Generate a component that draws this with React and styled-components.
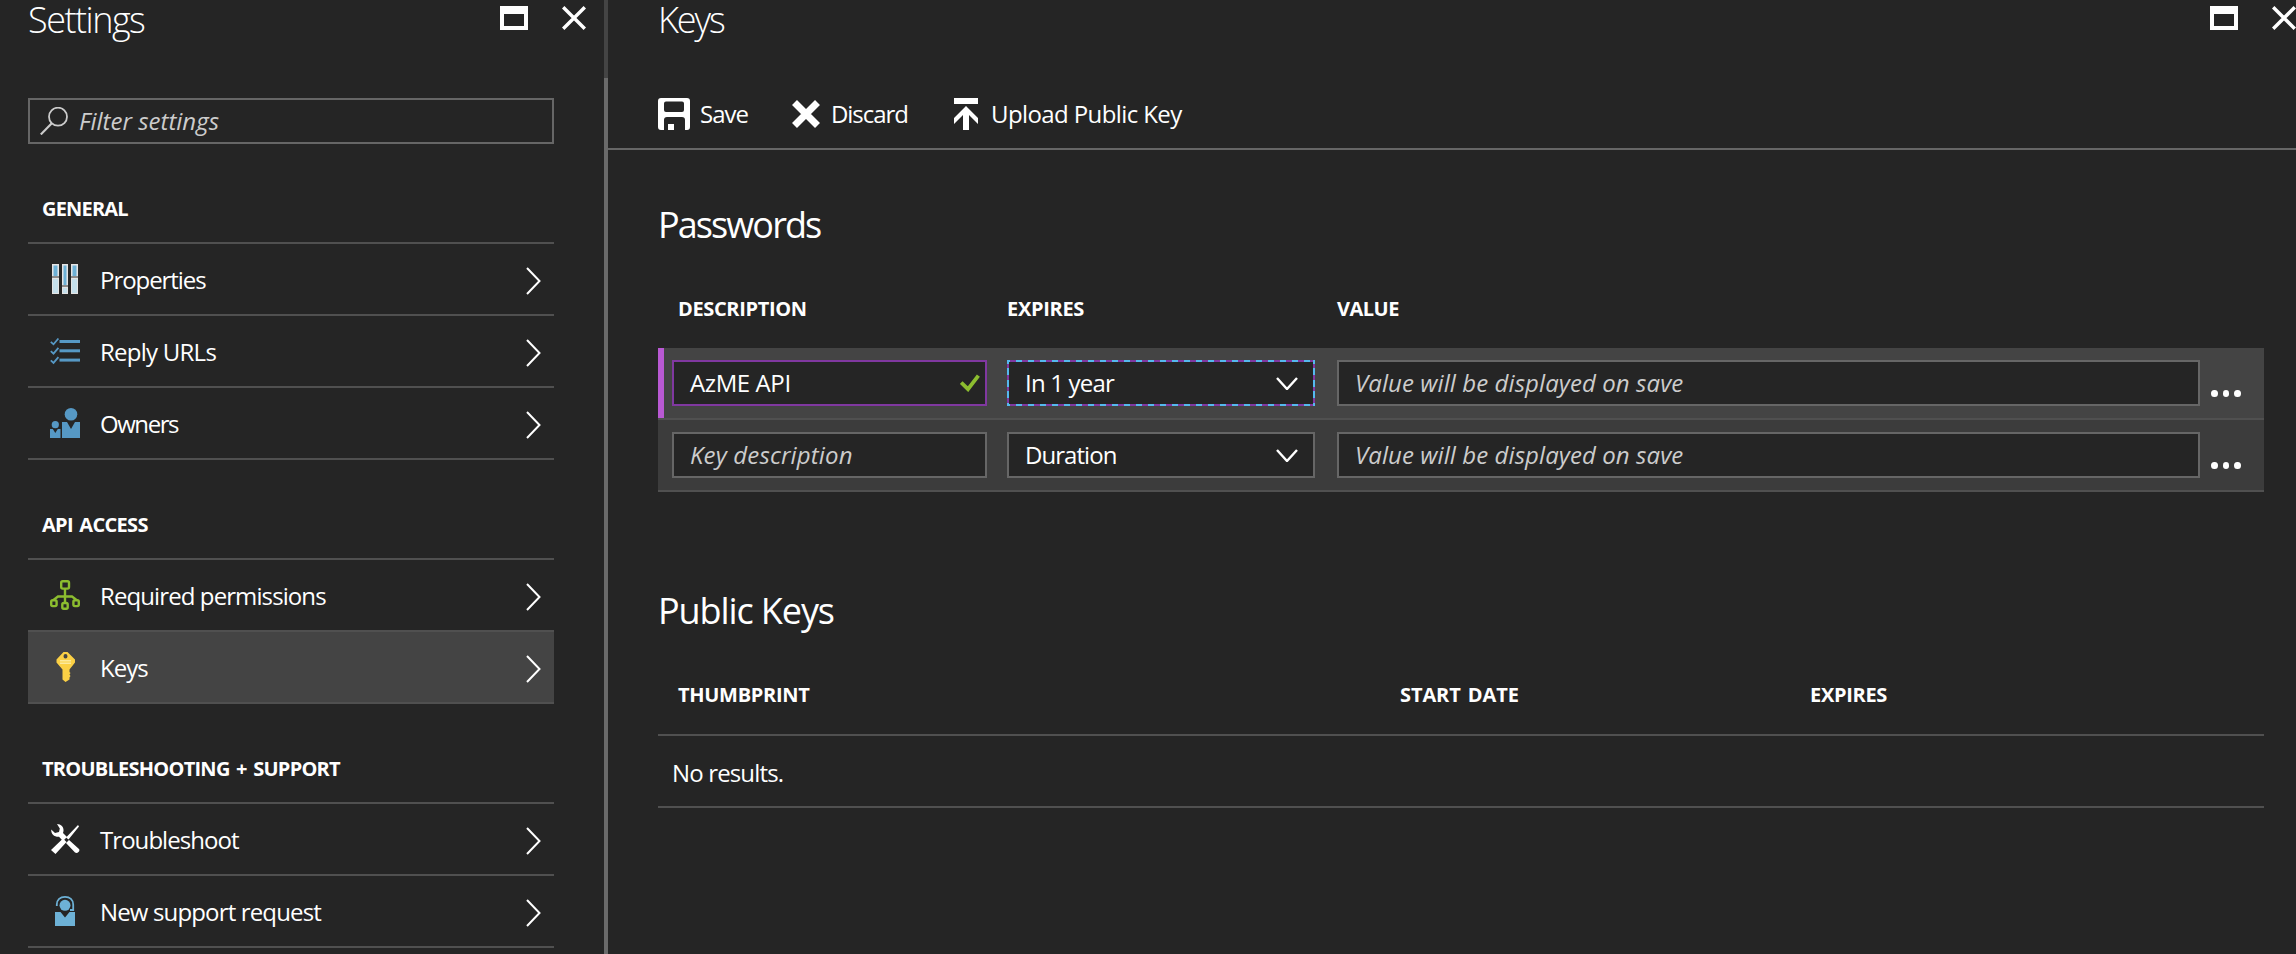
import React from 'react';
import styled, { createGlobalStyle } from 'styled-components';

const Global = createGlobalStyle`
  * { box-sizing: border-box; }
  body { margin: 0; background: #252525; color: #fff; font: 480 24px/32px 'Open Sans', 'Noto Sans', sans-serif; overflow: hidden; }
  h1, h2, h3 { margin: 0; font-weight: 420; }
  svg { display: block; flex: none; }
`;

const Page = styled.div`
  display: flex; width: 2296px; height: 954px; overflow: hidden;
`;
const Sidebar = styled.aside`
  width: 604px; padding: 0 50px 0 28px; flex: none;
`;
const Divider = styled.div`
  width: 4px; flex: none;
  background: linear-gradient(#444 78px, #6a6a6a 78px);
`;
const Main = styled.main`
  flex: 1; min-width: 0;
`;
const BladeHeader = styled.header`
  display: flex; justify-content: space-between; align-items: flex-start;
  height: 98px;
  margin-right: ${p => p.$right}px;
  padding-left: ${p => p.$left}px;
`;
const WindowButtons = styled.div`
  display: flex; gap: 34px; padding-top: 6px; flex: none;
`;
const Text = styled.span`
  white-space: nowrap;
  letter-spacing: ${p => p.$ls || 0}px;
  word-spacing: ${p => p.$ws || 0}px;
`;
const BladeTitle = styled.h1`
  font-size: 36px; line-height: 40px; font-weight: 350; white-space: nowrap;
  letter-spacing: ${p => p.$ls}px;
`;
const SearchBox = styled.div`
  display: flex; align-items: center; height: 46px; border: 2px solid #666; padding: 0 0 1px 10px; gap: 11px;
  color: #ccc; font-style: italic;
`;
const Group = styled.section`
  margin-top: 50px;
`;
const GroupTitle = styled.h3`
  font-size: 20px; line-height: 30px; font-weight: 700; padding-left: 14px; height: 48px; white-space: nowrap;
  letter-spacing: ${p => p.$ls}px;
  word-spacing: 2px;
`;
const MenuList = styled.div`
  border-top: 2px solid #505050;
`;
const MenuItem = styled.div`
  display: flex; align-items: center; height: 72px; padding: 0 13px 0 22px;
  border-bottom: 2px solid #505050;
  background: ${p => (p.$active ? '#444' : 'transparent')};
  & > span { flex: 1; padding-left: 20px; padding-top: 2px; }
  & > svg:last-child { margin-top: 3px; }
`;
const Toolbar = styled.div`
  display: flex; align-items: flex-start; height: 52px; padding-left: 50px; border-bottom: 2px solid #666;
`;
const ToolButton = styled.div`
  display: flex; align-items: center; height: 32px; width: ${p => p.$w}px; gap: ${p => p.$gap}px;
`;
const Content = styled.div`
  padding: 0 32px 0 50px;
`;
const SectionTitle = styled.h2`
  font-size: 36px; line-height: 48px; white-space: nowrap;
  margin-top: ${p => p.$top}px;
  letter-spacing: ${p => p.$ls}px;
`;
const HeadRow = styled.div`
  display: grid; grid-template-columns: ${p => p.$cols}; padding-left: 20px;
  font-size: 20px; line-height: 28px; font-weight: 700;
  margin-top: ${p => p.$top}px; height: ${p => p.$h}px;
`;
const KeyRow = styled.div`
  display: grid; grid-template-columns: 315px 310px 863px 30px; column-gap: 20px; align-items: center;
  height: 72px; padding-left: 14px;
  border-bottom: 2px solid #505050;
  background: ${p => (p.$dirty ? '#444' : '#3c3c3c')};
  box-shadow: ${p => (p.$dirty ? 'inset 6px 0 0 #b959d3' : 'none')};
`;
const Field = styled.div`
  display: flex; align-items: center; justify-content: space-between; height: 46px; position: relative;
  padding: 0 ${p => p.$pr || 15}px ${p => p.$pb || 0}px 16px;
  background: #252525;
  border: 2px solid ${p => (p.$dirty ? '#8038a0' : '#666')};
  color: ${p => (p.$hint ? '#ccc' : '#fff')};
  font-style: ${p => (p.$hint ? 'italic' : 'normal')};
`;
const SelectField = styled(Field)`
  width: 308px;
`;
const dashesX = 'repeating-linear-gradient(90deg, #55b9ee 0 3px, transparent 3px 9px, #55b9ee 9px 12px)';
const dashesY = 'repeating-linear-gradient(180deg, #55b9ee 0 4px, transparent 4px 8.5px, #55b9ee 8.5px 11.5px)';
const FocusRing = styled.div`
  position: absolute; inset: -2px;
  background: ${dashesX} 0 0 / 100% 2px, ${dashesX} 0 100% / 100% 2px, ${dashesY} 0 0 / 2px 100%, ${dashesY} 100% 0 / 2px 100%;
  background-repeat: no-repeat;
`;
const More = styled.div`
  display: flex; gap: 5px; padding-top: 21px; margin-left: -9px;
  & > i { width: 6.5px; height: 7px; border-radius: 50%; background: #fff; }
`;
const EmptyRow = styled.div`
  height: 74px; border: solid #505050; border-width: 2px 0; padding: 21px 0 0 14px;
`;

const RestoreIcon = () => (
  <svg width="28" height="24"><path fill="#fff" fillRule="evenodd" d="M0 0h28v24H0zM4 8v12h20V8z" /></svg>
);
const CloseIcon = () => (
  <svg width="24" height="24"><path d="M1.2 1.2 22.8 22.8M22.8 1.2 1.2 22.8" stroke="#fff" strokeWidth="3.4" /></svg>
);
const SearchIcon = () => (
  <svg width="28" height="28" fill="none" stroke="#ccc" strokeWidth="1.8"><circle cx="18" cy="9.7" r="9" /><path d="M11.8 16.2.8 27.4" strokeWidth="2.2" /></svg>
);
const Chevron = () => (
  <svg width="15" height="28" fill="none" stroke="#fff" strokeWidth="2"><path d="M1 1 13.5 14 1 27" /></svg>
);
const DownChevron = () => (
  <svg width="22" height="14" fill="none" stroke="#fff" strokeWidth="2.4"><path d="M1 2 11 13 21 2" /></svg>
);
const CheckIcon = () => (
  <svg width="20" height="18" fill="none" stroke="#8cbd2f" strokeWidth="3.8"><path d="M1.2 8.5 8 15.2 18.4 1.6" /></svg>
);
const PropertiesIcon = () => (
  <svg width="30" height="30">
    {[[2, 12, 7], [12, 21, 6], [21, 12, 7]].map(([x, y, w]) => (
      <g key={x}>
        <path fill="#e4e4e4" d={`M${x} 0h${w}v30h-${w}z`} />
        <path fill="#6db1d6" d={`M${x + 1.5} 1.5h${w - 3}v${y - 1.5}h-${w - 3}z`} />
        <path fill="#8a8a8a" d={`M${x} ${y}h${w}v2h-${w}z`} />
        <path fill="#c4dfeb" d={`M${x + 1} ${y + 3}h${w - 2}v${26 - y}h-${w - 2}z`} />
      </g>
    ))}
  </svg>
);
const ListIcon = () => (
  <svg width="30" height="30" fill="none" stroke="#5698c4">
    {[2.5, 11.8, 21.1].map(y => (
      <g key={y}>
        <path strokeWidth="1.8" d={`M.8 ${y + 3.3} 3.5 ${y + 5.8} 8.4 ${y}`} />
        <path strokeWidth="3" d={`M9.5 ${y + 3}H30`} />
      </g>
    ))}
  </svg>
);
const OwnersIcon = () => (
  <svg width="30" height="30" fill="#5698c4">
    <circle cx="21" cy="6.3" r="6.3" /><circle cx="5.3" cy="16.7" r="3.6" />
    <path d="M12 14h5l4 7 4-7h5v16H12zM0 21h2.8l2.5 4 2.5-4h2.7v9H0z" />
  </svg>
);
const PermissionsIcon = () => (
  <svg width="30" height="30" fill="none" stroke="#8cbd2f" strokeWidth="2.4">
    <rect x="11.2" y="1.2" width="7.8" height="7.4" rx="1.5" />
    <path d="M15 8.5v14M4 20.5v-1l4-3h14l4 3v1" />
    <rect x="1.2" y="20.3" width="5.4" height="5.8" rx="1.5" />
    <rect x="12.3" y="23" width="5.4" height="5.8" rx="1.5" />
    <rect x="23.4" y="20.3" width="5.4" height="5.8" rx="1.5" />
  </svg>
);
const KeyIcon = () => (
  <svg width="30" height="30">
    <path fill="#fbd045" fillRule="evenodd" d="M13.5 0h4L25 7.5v3L19.5 17.5v2.5l1 1-1 1.5 1 1.5-1 1.5v2L15.5 30 12.5 27.5v-10L6.5 10.5v-3zM15.5 2a2 2.2 0 1 0 0 4.4 2 2.2 0 0 0 0-4.4z" />
    <path fill="#fce99b" d="M10 8h11v1.5H10zM10 10.5h11V12H10z" />
  </svg>
);
const ToolsIcon = () => (
  <svg width="30" height="30" fill="#fff">
    <path d="M7 0c4 0 7 3 6.5 7l-.5 2 4 4-4 4-4-4.2C4 13 1 10 1.200 5.5L5 9l4-1 .8-3.500z" />
    <path d="M13 14.5 16.5 18 5.5 30 1 26zM28 1l1 1.5-10.5 13-2.5-2zM19 16l10 9c1.5 2-1.5 5-4 3.5L16 19z" />
  </svg>
);
const SupportIcon = () => (
  <svg width="30" height="30" fill="#6db1d6">
    <circle cx="15" cy="9.3" r="5.5" />
    <path fill="none" stroke="#6db1d6" strokeWidth="1.8" d="M6.8 10V8.5C7 4 10 .9 15 .9s8 3.1 8.200 7.6V14H20" />
    <path d="M5 16h5.5l4.5 5.5 4.500-5.5H25v14H5z" />
  </svg>
);
const SaveIcon = () => (
  <svg width="32" height="32"><path fill="#fff" fillRule="evenodd" d="M3 0h26q3 0 3 3v26q0 3-3 3h-2V22q0-3-3-3H9q-3 0-3 3v10H3q-3 0-3-3V3q0-3 3-3zM8 3.5q-2 0-2 2v6.5q0 2 2 2h16q2 0 2-2V5.5q0-2-2-2zM10 26h6v6h-6z" /></svg>
);
const DiscardIcon = () => (
  <svg width="28" height="28" stroke="#fff" strokeWidth="7"><path d="M2.5 2.5l23 23M25.5 2.5l-23 23" /></svg>
);
const UploadIcon = () => (
  <svg width="24" height="32" fill="#fff"><path d="M0 0h24v6H0zM12 8l12 12v6l-9-9v15H9V17l-9 9v-6z" /></svg>
);

const groups = [
  { title: 'GENERAL', ls: -0.8, items: [
    ['Properties', PropertiesIcon, -1.05], ['Reply URLs', ListIcon, -0.75], ['Owners', OwnersIcon, -1.45]] },
  { title: 'API ACCESS', ls: -0.7, items: [
    ['Required permissions', PermissionsIcon, -0.9], ['Keys', KeyIcon, -1]] },
  { title: 'TROUBLESHOOTING + SUPPORT', ls: -0.75, items: [
    ['Troubleshoot', ToolsIcon, -0.95], ['New support request', SupportIcon, -0.85]] },
];

export default function App() {
  return (
    <Page>
      <Global />
      <Sidebar>
        <BladeHeader $left={0} $right={-32}>
          <BladeTitle $ls={-1.5}>Settings</BladeTitle>
          <WindowButtons><RestoreIcon /><CloseIcon /></WindowButtons>
        </BladeHeader>
        <SearchBox><SearchIcon /><Text $ls={0}>Filter settings</Text></SearchBox>
        {groups.map(g => (
          <Group key={g.title}>
            <GroupTitle $ls={g.ls}>{g.title}</GroupTitle>
            <MenuList>
              {g.items.map(([label, Icon, ls]) => (
                <MenuItem key={label} $active={label === 'Keys'}>
                  <Icon /><Text $ls={ls}>{label}</Text><Chevron />
                </MenuItem>
              ))}
            </MenuList>
          </Group>
        ))}
      </Sidebar>
      <Divider />
      <Main>
        <BladeHeader $left={50} $right={0}>
          <BladeTitle $ls={-2.1}>Keys</BladeTitle>
          <WindowButtons><RestoreIcon /><CloseIcon /></WindowButtons>
        </BladeHeader>
        <Toolbar>
          <ToolButton $w={134} $gap={10}><SaveIcon /><Text $ls={-1}>Save</Text></ToolButton>
          <ToolButton $w={162} $gap={11}><DiscardIcon /><Text $ls={-1.05}>Discard</Text></ToolButton>
          <ToolButton $w={240} $gap={13}><UploadIcon /><Text $ls={-0.6}>Upload Public Key</Text></ToolButton>
        </Toolbar>
        <Content>
          <SectionTitle $top={51} $ls={-1.9}>Passwords</SectionTitle>
          <HeadRow $cols="329px 330px 1fr" $top={46} $h={53}>
            <Text $ls={-0.35}>DESCRIPTION</Text><Text $ls={-0.3}>EXPIRES</Text><Text $ls={-0.5}>VALUE</Text>
          </HeadRow>
          <KeyRow $dirty>
            <Field $dirty $pr={5}><Text $ls={-0.4}>AzME API</Text><CheckIcon /></Field>
            <SelectField $dirty><Text $ls={-0.8}>In 1 year</Text><DownChevron /><FocusRing /></SelectField>
            <Field $hint $pb={1}><Text $ls={0.08}>Value will be displayed on save</Text></Field>
            <More><i /><i /><i /></More>
          </KeyRow>
          <KeyRow>
            <Field $hint $pb={1}><Text $ls={0.15}>Key description</Text></Field>
            <SelectField><Text $ls={-0.95}>Duration</Text><DownChevron /></SelectField>
            <Field $hint $pb={1}><Text $ls={0.08}>Value will be displayed on save</Text></Field>
            <More><i /><i /><i /></More>
          </KeyRow>
          <SectionTitle $top={95} $ls={-1.1}>Public Keys</SectionTitle>
          <HeadRow $cols="722px 410px 1fr" $top={46} $h={53}>
            <Text $ls={-0.3}>THUMBPRINT</Text><Text $ls={-0.1} $ws={2}>START DATE</Text><Text $ls={-0.3}>EXPIRES</Text>
          </HeadRow>
          <EmptyRow><Text $ls={-0.85}>No results.</Text></EmptyRow>
        </Content>
      </Main>
    </Page>
  );
}
